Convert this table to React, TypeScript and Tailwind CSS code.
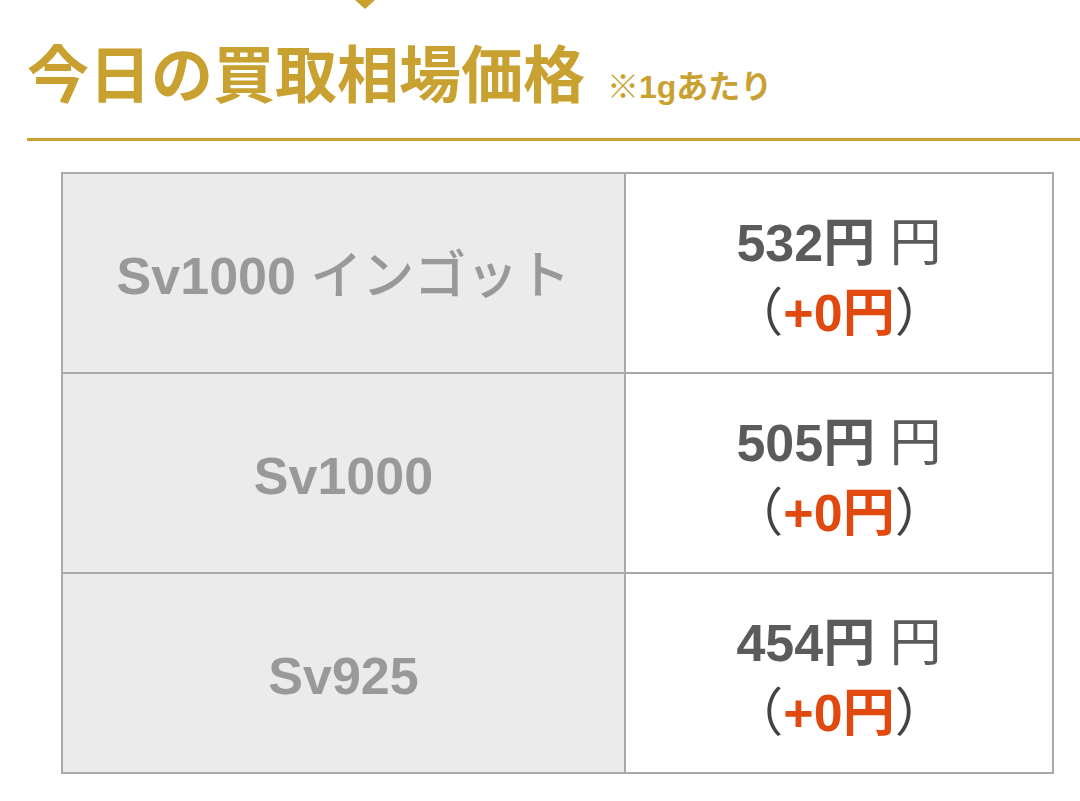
const rows = [
  { code: "Sv1000", suffix: "インゴット", price: 532, diff: 0 },
  { code: "Sv1000", suffix: "", price: 505, diff: 0 },
  { code: "Sv925", suffix: "", price: 454, diff: 0 },
];

const font = { fontFamily: '"Liberation Sans", "Noto Sans CJK JP", sans-serif' };

export default function App() {
  return (
    <div
      className="w-[1080px] h-[801px] overflow-hidden bg-white"
      style={font}
    >
      {/* tip of the arrow from the section above */}
      <svg width="20" height="9" viewBox="0 0 20 9" className="ml-[355px] block">
        <path d="M0 0 H20 L10 9 Z" fill="#c9a130" />
      </svg>

      <div className="flex items-baseline pl-[27px] pt-[37px]">
        <h2 className="text-[62px] leading-none font-bold text-[#c9a130]">
          今日の買取相場価格
        </h2>
        <span className="ml-[22px] text-[32px] leading-none font-bold text-[#c9a130]">
          ※1gあたり
        </span>
      </div>

      <div className="ml-[27px] mt-[30px] h-[3px] bg-[#c9a130]" />

      <table className="ml-[61px] mt-[31px] w-[993px] border-collapse">
        <tbody>
          {rows.map((row, i) => (
            <tr key={i} className="h-[200px]">
              <td className="w-[563px] border-2 border-[#a9a9a9] bg-[#ebebeb] pt-[6px] text-center text-[52px] text-[#999999]">
                <span className="font-bold">{row.code}</span>
                {row.suffix && <span className="font-medium"> {row.suffix}</span>}
              </td>
              <td className="border-2 border-[#a9a9a9] pt-[10px] text-center leading-[70px]">
                <div className="text-[52px] text-[#5b5b5b]">
                  <span className="font-bold">{row.price}円</span> 円
                </div>
                <div className="text-[52px] text-[#444]">
                  （<span className="font-bold text-[#e2490f]">+{row.diff}円</span>）
                </div>
              </td>
            </tr>
          ))}
        </tbody>
      </table>
    </div>
  );
}
